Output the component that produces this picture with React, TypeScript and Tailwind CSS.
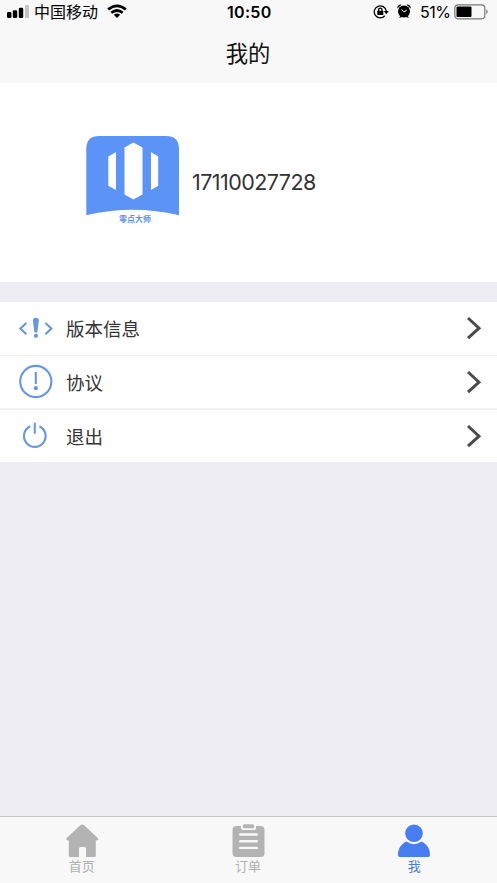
import React from "react";

const cjk = "font-['Inter','Noto_Sans_CJK_SC',sans-serif]";

function StatusBar() {
  return (
    <div className="flex h-6 items-center text-black">
      <svg className="ml-[7px] block h-6 w-[22px] shrink-0" viewBox="0 0 22 24">
        <rect x="0" y="12" width="4.4" height="6" rx="1.2" />
        <rect x="5.8" y="10.3" width="4.4" height="7.7" rx="1.2" />
        <rect x="11.8" y="7.7" width="4.4" height="10.3" rx="1.2" />
        <rect x="18" y="5" width="4" height="13" rx="1.2" fill="#c4c4c4" />
      </svg>
      <span className="ml-[5px] w-[66px] whitespace-nowrap text-[16px] leading-6">中国移动</span>
      <svg className="ml-[7px] block h-6 w-5 shrink-0" viewBox="0 0 20 24" fill="none" stroke="black" strokeWidth="2.7">
        <path d="M1.2 9.4Q10 2.2 18.8 9.4" />
        <path d="M4.3 12.8Q10 8.2 15.7 12.8" />
        <path d="M10 18L6.8 14.8Q10 12.2 13.2 14.8Z" fill="black" stroke="none" />
      </svg>
      <span className="ml-[100px] w-[46px] whitespace-nowrap text-[16px] font-semibold leading-6 tracking-[0.3px]">10:50</span>
      <svg className="ml-[100px] block h-6 w-4 shrink-0" viewBox="0 0 16 24" fill="none" stroke="black" strokeWidth="1.3">
        <path d="M11.8 15.8A6 6 0 1 1 13.2 11" />
        <path d="M10.8 11h5l-2.5 3.3z" fill="black" stroke="none" />
        <rect x="4.3" y="10.8" width="6" height="4.3" rx=".5" fill="black" stroke="none" />
        <path d="M5.6 11V9.8a1.7 1.7 0 0 1 3.4 0V11" />
      </svg>
      <svg className="ml-[8px] block h-6 w-[14px] shrink-0" viewBox="0 0 14 24">
        <circle cx="7" cy="11.6" r="6" />
        <path d="M.4 8.5A3.2 3.2 0 0 1 4.6 4.8zM9.4 4.8a3.2 3.2 0 0 1 4.2 3.7zM2 17.8l1.5-2 2 1.2zM12 17.8l-1.5-2-2 1.2z" />
        <path d="M4.6 9.4L7 11.9l2.8-1.8" fill="none" stroke="white" strokeWidth="1" />
      </svg>
      <span className="ml-[9px] w-[31px] whitespace-nowrap text-[16px] leading-6 tracking-[-0.5px]">51%</span>
      <svg className="ml-[3px] block h-6 w-9 shrink-0" viewBox="0 0 36 24">
        <rect x=".8" y="4.8" width="30" height="14" rx="3.2" fill="none" stroke="#777" strokeWidth="1.2" />
        <rect x="2.5" y="6.5" width="15" height="10.6" rx="1" />
        <path d="M32.3 9q2.8 2.6 0 5.4z" fill="#777" />
      </svg>
    </div>
  );
}

function Logo() {
  return (
    <div className="relative h-[92px] w-[93px] shrink-0">
      <svg className="block h-[80px] w-[93px]" viewBox="0 0 93 80">
        <path d="M.3 79.3V13Q.3 0 13 0H80Q93 0 93 13V79.3Q46.5 68.2 .3 79.3Z" fill="#5b94f6" />
        <path
          d="M38.5 11.5L47.4 6.5 56.5 11.5V58.4L47.4 63.5 38.5 58.4ZM22.3 20.5L30 16V54L22.3 49.8ZM65 16L72.2 20.5V49.8L65 54Z"
          fill="#fff"
        />
      </svg>
      <span className="absolute left-[33px] top-[77px] whitespace-nowrap text-[8px] font-bold leading-[12px] text-[#5c91ec]">
        零点大师
      </span>
    </div>
  );
}

function Row({ icon, label }: { icon: React.ReactNode; label: string }) {
  return (
    <div className="flex h-[52.6px] items-center bg-white">
      <svg
        className="ml-[18px] block h-9 w-9 shrink-0"
        viewBox="0 0 36 36"
        fill="none"
        stroke="#6796e2"
        strokeWidth="2.1"
      >
        {icon}
      </svg>
      <span className="ml-[12px] flex-1 pt-[2px] text-[18.5px] leading-7 text-[#333]">{label}</span>
      <svg className="mr-[15px] block h-6 w-4 shrink-0" viewBox="0 0 16 24" fill="none" stroke="#4b4b4b" strokeWidth="3">
        <path d="M2 2L13 12.2 2 22.2" />
      </svg>
    </div>
  );
}

function Tab({ label, color, children }: { label: string; color: string; children: React.ReactNode }) {
  return (
    <div className="flex flex-1 flex-col items-center pt-[7px]">
      <svg className="block h-[34px] w-[34px]" viewBox="0 0 34 34">
        {children}
      </svg>
      <span className={`text-[13px] leading-[16px] ${color}`}>{label}</span>
    </div>
  );
}

export default function App() {
  return (
    <div className={`flex h-[883px] w-[497px] flex-col overflow-hidden bg-[#eeedf3] ${cjk}`}>
      <header className="h-[83px] bg-[#f8f8f8]">
        <StatusBar />
        <h1 className="pr-px pt-[12px] text-center text-[22.3px] leading-9 text-[#111]">我的</h1>
      </header>
      <section className="flex h-[199px] items-start bg-white pl-[86px] pt-[53px]">
        <Logo />
        <span className="ml-[13px] mt-[31px] text-[21.5px] leading-[30px] tracking-[-0.55px] text-[#333]">17110027728</span>
      </section>
      <main className="mt-5 flex flex-col gap-[1.2px] bg-[#f1f1f2]">
        <Row
          label="版本信息"
          icon={
            <>
              <path d="M8.3 12.9L2.4 18.5l5.9 5.8M27.4 12.9l6 5.6-6 5.8" />
              <path d="M14.9 10.7a3 3 0 0 1 6 0L19.3 22.5h-2.8z" fill="#6796e2" stroke="none" />
              <circle cx="17.9" cy="25.8" r="2.1" fill="#6796e2" stroke="none" />
            </>
          }
        />
        <Row
          label="协议"
          icon={
            <>
              <circle cx="17.8" cy="17.5" r="15.6" />
              <path d="M17.8 8v12" />
              <circle cx="17.8" cy="24.2" r="2.1" fill="#6796e2" stroke="none" />
            </>
          }
        />
        <Row
          label="退出"
          icon={
            <>
              <path d="M12.2 8.3a10.8 10.8 0 1 0 9.2 0" />
              <path d="M16.8 4.7v11" />
            </>
          }
        />
      </main>
      <nav className="mt-auto flex h-[67px] border-t border-[#c5c5c8] bg-[#f8f8f8]">
        <Tab label="首页" color="text-[#b0b0b0] -ml-[2px]">
          <path
            d="M14.3 1.2q1.9-1.6 3.8 0L31.8 14Q33 16 31 16.5H29.8V31.5q0 1.5-1.5 1.5H20V24.8q0-1.8-1.8-1.8H14.8q-1.8 0-1.8 1.8V33H4.3q-1.5 0-1.5-1.5V16.5H1.6Q-.4 16 .7 14Z"
            fill="#b3b3b3"
          />
        </Tab>
        <Tab label="订单" color="text-[#b0b0b0] -ml-px">
          <rect x=".5" y="2" width="32" height="31" rx="4" fill="#b3b3b3" />
          <rect x="9" y="-1" width="15" height="7" rx="2" fill="#f8f8f8" />
          <rect x="10.8" y=".3" width="11.4" height="4" rx="1.5" fill="#b3b3b3" />
          <path d="M8.2 10.5h16.6M8.2 17.2h16.6M8.2 23.9h16.6" stroke="#f8f8f8" strokeWidth="2.4" strokeLinecap="round" />
        </Tab>
        <Tab label="我" color="text-[#4c7fdb]">
          <circle cx="17" cy="9.2" r="8.8" fill="#467df0" />
          <path d="M1 31C1 23.5 5 19.5 9.5 17.5Q17 22.8 24.5 17.5C29 19.5 33 23.5 33 31Q33 33 31 33H3Q1 33 1 31Z" fill="#467df0" />
        </Tab>
      </nav>
    </div>
  );
}
